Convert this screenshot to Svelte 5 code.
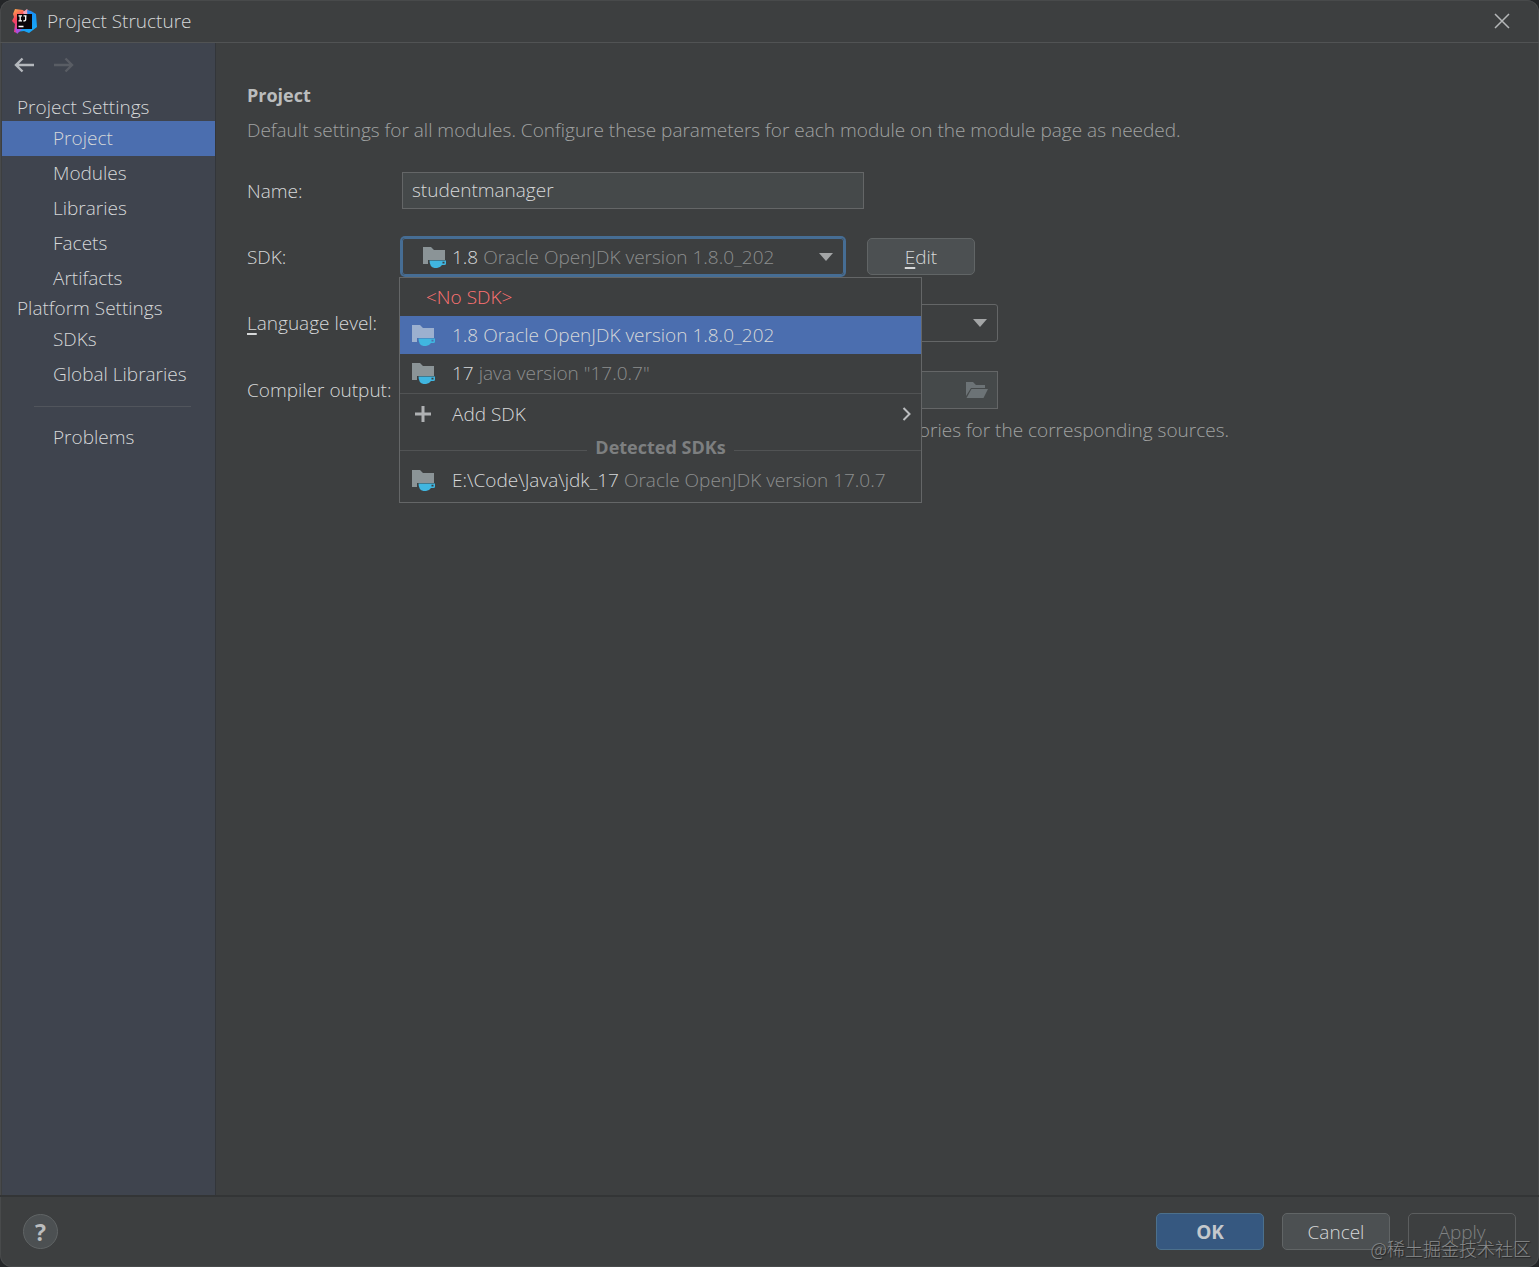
<script>
  const projectItems = ['Project', 'Modules', 'Libraries', 'Facets', 'Artifacts'];
  const platformItems = ['SDKs', 'Global Libraries'];
  let current = $state('Project');
  let name = $state('studentmanager');
</script>

{#snippet sdkIcon()}
  <svg class="sdk-icon" width="24" height="22" viewBox="0 0 24 22" aria-hidden="true">
    <path class="folder" d="M0 1h8l3 3h11v10H5v4H0z" />
    <path class="cup" fill-rule="evenodd" d="M6.500 14.500h16.500v3q0 1.500-1.500 1.500h-2.500q-2 3-5 3h-2.500q-5-1-5-7.500zM19.500 15.800v1.800h2v-1.800z" />
  </svg>
{/snippet}

{#snippet arrow()}
  <svg class="arrow" width="14" height="8" viewBox="0 0 14 8" aria-hidden="true"><path d="M0 0h14L7 8z" /></svg>
{/snippet}

{#snippet navLink(label)}
  <a href="#{label}" class="item" class:active={current === label} onclick={() => (current = label)}>{label}</a>
{/snippet}

<div class="window">
  <header>
    <svg width="25" height="25" viewBox="0 0 25 25" aria-hidden="true">
      <defs>
        <linearGradient id="warm" x1="0" y1="0" x2="0.4" y2="1">
          <stop offset="0" stop-color="#ffb64c" />
          <stop offset="0.45" stop-color="#f5455c" />
          <stop offset="1" stop-color="#d83cae" />
        </linearGradient>
        <linearGradient id="cool" x1="0" y1="0" x2="0.6" y2="1">
          <stop offset="0" stop-color="#6a6ee0" />
          <stop offset="0.45" stop-color="#1791f5" />
          <stop offset="1" stop-color="#18a7f7" />
        </linearGradient>
      </defs>
      <path fill="url(#warm)" d="M3 0l8 1 5 6-4 11-7 6-3-1 1-8-3-3 2-4-1-3z" />
      <path fill="#f0a0b8" d="M11 3l4-3 4 5-6 3z" />
      <path fill="url(#cool)" d="M15 1l4 1 5 3 1 13-8 6-5-2-8 1 2-5 10-4z" />
      <path fill="#a950df" d="M3 19l7 1-5 5z" />
      <rect x="5" y="5" width="15" height="15" fill="#0b0509" />
      <path fill="none" stroke="#fff" stroke-width="1.300" d="M6.500 6.800h3.500M8.200 7v5M6.500 11.900h3.500M11.500 6.800h3M13.700 7v3.500q0 1.600-2.400 1.300M6.500 17.500h5" />
    </svg>
    <h1>Project Structure</h1>
    <button class="plain close" aria-label="Close">
      <svg width="16" height="16" viewBox="0 0 16 16"><path d="M1 1l14 14M15 1L1 15" fill="none" stroke="#b5b7b8" stroke-width="1.500" /></svg>
    </button>
  </header>

  <div class="body">
    <nav>
      <div class="history">
        <button class="plain" aria-label="Back">
          <svg width="20" height="16" viewBox="0 0 20 16"><path d="M20 8H2M8.500 1.500L2 8l6.500 6.500" fill="none" stroke="#b4b8bd" stroke-width="2.400" /></svg>
        </button>
        <button class="plain" aria-label="Forward" disabled>
          <svg width="20" height="16" viewBox="0 0 20 16"><path d="M0 8h18M11.500 1.500L18 8l-6.500 6.500" fill="none" stroke="#595d64" stroke-width="2.400" /></svg>
        </button>
      </div>
      <h2>Project Settings</h2>
      {#each projectItems as item}{@render navLink(item)}{/each}
      <h2>Platform Settings</h2>
      {#each platformItems as item}{@render navLink(item)}{/each}
      <hr />
      {@render navLink('Problems')}
    </nav>

    <main>
      <h3>Project</h3>
      <p class="intro">Default settings for all modules. Configure these parameters for each module on the module page as needed.</p>

      <form class="form">
        <label for="name">Name:</label>
        <input id="name" class="name" type="text" bind:value={name} spellcheck="false" />

        <label for="sdk">SDK:</label>
        <div class="sdk-row">
          <div class="sdk-field">
            {@render sdkIcon()}
            <span class="version">1.8</span>
            <select id="sdk"><option>Oracle OpenJDK version 1.8.0_202</option></select>
            {@render arrow()}
            <div class="popup" role="listbox" aria-label="SDK">
              <button type="button" class="option none" role="option" aria-selected="false">&lt;No SDK&gt;</button>
              <button type="button" class="option selected" role="option" aria-selected="true">{@render sdkIcon()}<span>1.8 <small>Oracle OpenJDK version 1.8.0_202</small></span></button>
              <button type="button" class="option" role="option" aria-selected="false">{@render sdkIcon()}<span>17 <small>java version "17.0.7"</small></span></button>
              <div class="rule"></div>
              <button type="button" class="option" role="option" aria-selected="false">
                <svg width="24" height="16" viewBox="0 0 24 16" aria-hidden="true"><path d="M3 8h16M11 0v16" fill="none" stroke="#afb1b3" stroke-width="3" /></svg>
                <span>Add SDK</span>
                <svg class="more" width="9" height="14" viewBox="0 0 9 14" aria-hidden="true"><path d="M1.500 1l6 6-6 6" fill="none" stroke="#bbbdbf" stroke-width="2" /></svg>
              </button>
              <div class="detected">Detected SDKs</div>
              <button type="button" class="option" role="option" aria-selected="false">{@render sdkIcon()}<span>E:\Code\Java\jdk_17 <small>Oracle OpenJDK version 17.0.7</small></span></button>
            </div>
          </div>
          <button type="button" class="button"><u>E</u>dit</button>
        </div>

        <label for="level"><u>L</u>anguage level:</label>
        <div class="level">
          <select id="level"><option></option></select>
          {@render arrow()}
        </div>

        <label for="output">Compiler output:</label>
        <div class="output">
          <input id="output" type="text" />
          <button type="button" class="plain" aria-label="Browse">
            <svg width="23" height="18" viewBox="0 0 23 18"><path fill="#6c7376" d="M1 1h7l3 3h9v3H6l-5 8z" /><path fill="#6c7376" d="M6.500 8H23l-4.500 9H1.500z" /></svg>
          </button>
        </div>
        <p class="hint">Used for module subdirectories, Production and Test directories for the corresponding sources.</p>
      </form>
    </main>
  </div>

  <footer>
    <button class="help" aria-label="Help">?</button>
    <button class="button primary">OK</button>
    <button class="button">Cancel</button>
    <button class="button off" disabled>Apply</button>
    <span class="mark">@稀土掘金技术社区</span>
  </footer>
</div>

<style>
  :global(body) {
    margin: 0;
    background: #242628;
  }
  * {
    box-sizing: border-box;
  }
  .window {
    display: flex;
    flex-direction: column;
    min-height: 100vh;
    overflow: hidden;
    background: #3d3f40;
    border-radius: 12px;
    box-shadow: inset 0 0 0 1px #484a4b;
    color: #d6d8d9;
    font: 300 19px/24px 'Open Sans', 'Noto Sans CJK SC', sans-serif;
  }
  h1, h2, h3, p {
    margin: 0;
    font: inherit;
  }
  button, input, select {
    font: inherit;
    color: inherit;
  }
  .plain {
    display: flex;
    padding: 0;
    border: 0;
    background: none;
  }
  header {
    display: flex;
    align-items: center;
    gap: 10px;
    height: 43px;
    padding: 0 29px 0 12px;
    border-bottom: 1px solid #515354;
  }
  .close {
    margin-left: auto;
  }
  .body {
    display: flex;
    flex: 1;
  }
  nav {
    flex: none;
    width: 214px;
    margin-left: 2px;
    background: #3f444e;
    border-right: 1px solid #33363a;
  }
  .history {
    display: flex;
    align-items: center;
    gap: 20px;
    height: 44px;
    padding: 0 12px;
  }
  h2 {
    height: 26px;
    padding-left: 15px;
    line-height: 24px;
  }
  .history + h2 {
    margin-top: 8px;
  }
  .item {
    display: block;
    padding-left: 51px;
    color: inherit;
    line-height: 35px;
    text-decoration: none;
  }
  .active {
    background: #4b6eaf;
  }
  hr {
    height: 1px;
    margin: 14px 24px 13px 32px;
    border: 0;
    background: #51555c;
  }
  main {
    flex: 1;
    padding: 40px 31px;
  }
  h3 {
    color: #bbbdbe;
    font-size: 18px;
    font-weight: 700;
  }
  .intro {
    margin-top: 11px;
    color: #a0a2a2;
  }
  .form {
    display: grid;
    grid-template-columns: 155px 1fr;
    row-gap: 29px;
    align-items: center;
    margin-top: 30px;
  }
  label {
    white-space: nowrap;
  }
  u {
    text-decoration-thickness: 2px;
    text-underline-offset: 3px;
  }
  input {
    min-width: 0;
    border: 1px solid #646667;
    background: #45494a;
  }
  .name {
    width: 462px;
    height: 37px;
    padding: 0 9px 2px;
  }
  select {
    flex: 1;
    min-width: 0;
    padding: 0;
    border: 0;
    outline: 0;
    appearance: none;
    background: none;
  }
  .sdk-row {
    display: flex;
    gap: 23px;
  }
  .sdk-field {
    position: relative;
    display: flex;
    align-items: center;
    width: 442px;
    height: 37px;
    padding: 0 10px 0 20px;
    border: 1px solid #466d94;
    border-radius: 3px;
    box-shadow: 0 0 0 2px #466d94;
  }
  .sdk-field select {
    color: #8c8e8e;
  }
  .version {
    margin: 0 5px;
  }
  .sdk-icon {
    flex: none;
  }
  .folder {
    fill: #8b9497;
  }
  .cup {
    fill: #40b6e0;
  }
  .selected .folder {
    fill: #9cb0cf;
  }
  .arrow {
    flex: none;
    fill: #a3a5a6;
    pointer-events: none;
  }
  .button {
    width: 108px;
    height: 37px;
    padding: 0;
    border: 1px solid #616566;
    border-radius: 5px;
    background: #4c5052;
  }
  .popup {
    position: absolute;
    z-index: 1;
    top: 38px;
    left: -4px;
    width: 523px;
    padding-bottom: 3px;
    border: 1px solid #646667;
    background: #3d3f40;
  }
  .option {
    display: flex;
    align-items: center;
    gap: 16px;
    width: 100%;
    height: 38px;
    padding: 0 10px 0 12px;
    border: 0;
    background: none;
    text-align: left;
    white-space: nowrap;
  }
  .none {
    padding-left: 26px;
    color: #ff7373;
  }
  small {
    color: #8c8e8e;
    font-size: 19px;
  }
  .selected {
    background: #4b6eaf;
  }
  .selected small {
    color: inherit;
  }
  .rule {
    height: 1px;
    margin: 1px 0;
    background: #515354;
  }
  .more {
    margin-left: auto;
  }
  .detected {
    display: flex;
    align-items: center;
    gap: 8px;
    height: 28px;
    color: #7d7f80;
    font-size: 18px;
    font-weight: 700;
  }
  .detected::before,
  .detected::after {
    content: '';
    flex: 1;
    height: 1px;
    margin-top: 6px;
    background: #515354;
  }
  .level,
  .output {
    display: flex;
    align-items: center;
    width: 596px;
    height: 38px;
    border: 1px solid #646667;
  }
  .level {
    padding-right: 10px;
    border-radius: 3px;
  }
  .output {
    padding-right: 9px;
    background: #45494a;
  }
  .output input {
    flex: 1;
    border: 0;
  }
  .hint {
    grid-column: 2;
    margin-top: -20px;
    padding-left: 11px;
    color: #a0a2a2;
    white-space: nowrap;
  }
  footer {
    position: relative;
    display: flex;
    align-items: center;
    gap: 18px;
    height: 72px;
    padding: 0 23px 1px;
    border-top: 2px solid #333536;
  }
  .help {
    width: 35px;
    height: 35px;
    margin-right: auto;
    padding: 0;
    border: 1px solid #606465;
    border-radius: 50%;
    background: #4c5052;
    color: #bbbdbe;
    font-size: 23px;
    font-weight: 700;
  }
  .primary {
    border-color: #4c708c;
    background: #365880;
    color: #c4c8cc;
    font-weight: 700;
  }
  .off {
    border-color: #5c5e5f;
    background: none;
    color: #808283;
  }
  .mark {
    position: absolute;
    right: 8px;
    bottom: 7px;
    color: #8a8c8d;
    font-size: 18px;
    font-family: 'Noto Sans CJK SC', sans-serif;
    text-shadow: 1px 1px 1px #222;
    pointer-events: none;
  }
</style>
